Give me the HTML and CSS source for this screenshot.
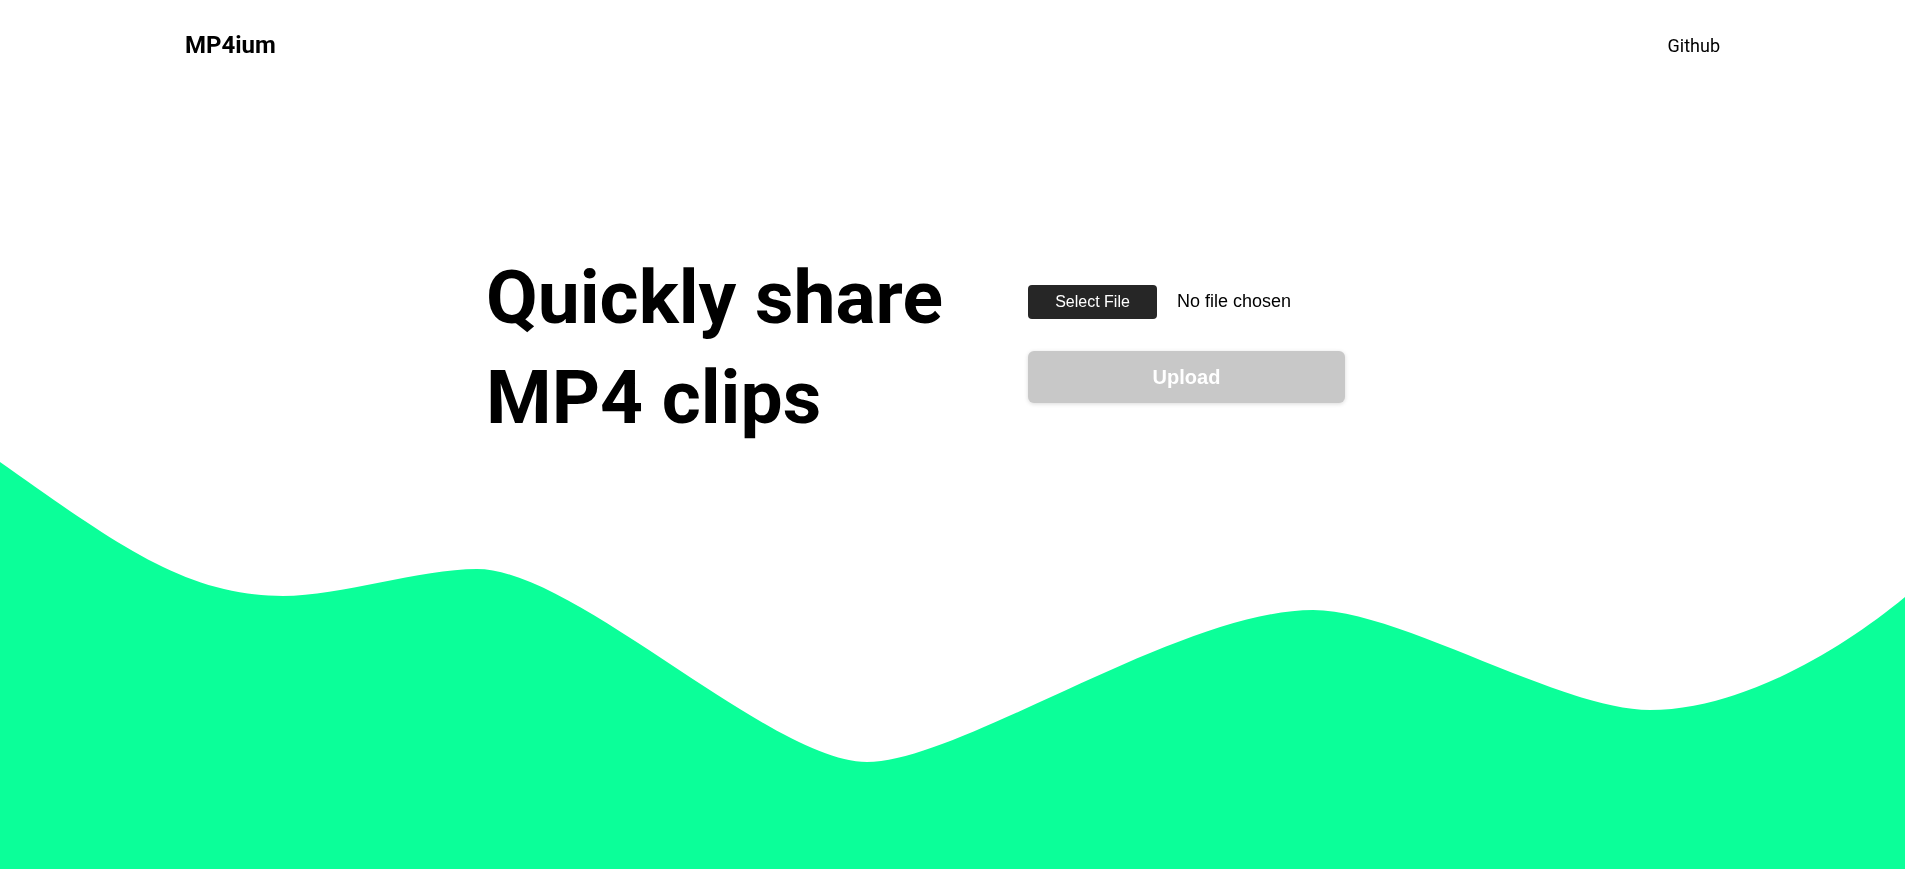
FILE: index.html
```html
<!DOCTYPE html>
<html lang="en">
<head>
<meta charset="utf-8">
<title>MP4ium</title>
<link rel="stylesheet" href="styles.css">
</head>
<body>
<header class="nav">
  <a class="logo" href="#">MP4ium</a>
  <a class="nav-link" href="#">Github</a>
</header>
<main class="hero">
  <h1 class="title">Quickly share<br>MP4 clips</h1>
  <form class="uploader">
    <div class="file-row">
      <label class="file-btn">Select File</label>
      <span class="file-name">No file chosen</span>
    </div>
    <button class="upload-btn" type="button" disabled>Upload</button>
  </form>
</main>
<svg class="wave" viewBox="0 440 1905 429" preserveAspectRatio="none" aria-hidden="true">
  <path fill="#0bff99" d="M0,462 C110,539 183,596 283,596 C340,596 420,569 477,569 C575,569 770,762 867,762 C960,762 1180,610 1313,610 C1400,610 1560,710 1650,710 C1740,710 1840,651 1905,597 L1905,869 L0,869 Z"/>
</svg>
</body>
</html>
```
FILE: styles.css
```css
* { box-sizing: border-box; }
html, body { margin: 0; padding: 0; }
body {
  font-family: Roboto, "Liberation Sans", Arial, sans-serif;
  color: #000;
  background: #fff;
  min-height: 100vh;
  overflow: hidden;
}
.nav {
  display: flex;
  justify-content: space-between;
  align-items: center;
  height: 90px;
  padding: 0 185px;
}
.logo {
  font-weight: 700;
  font-size: 24px;
  color: #000;
  text-decoration: none;
}
.nav-link {
  font-size: 18px;
  color: #000;
  text-decoration: none;
}
.hero {
  display: grid;
  grid-template-columns: 545px 1fr;
  align-items: center;
  width: 939px;
  margin: 157px auto 0;
}
.title {
  margin: 0;
  font-size: 75px;
  line-height: 100px;
  font-weight: 700;
  padding-left: 3px;
}
.uploader {
  display: flex;
  flex-direction: column;
  gap: 32px;
  align-items: flex-start;
  margin-bottom: 6px;
}
.file-row {
  display: flex;
  align-items: center;
  gap: 20px;
}
.file-btn {
  display: flex;
  align-items: center;
  justify-content: center;
  width: 129px;
  height: 34px;
  background: #262626;
  color: #fff;
  border-radius: 4px;
  font-family: "Liberation Sans", Arial, sans-serif;
  font-size: 16px;
}
.file-name {
  font-family: "Liberation Sans", Arial, sans-serif;
  font-size: 18px;
  margin-top: -2px;
}
.upload-btn {
  width: 317px;
  height: 52px;
  border: none;
  border-radius: 6px;
  background: #c8c8c8;
  color: #fff;
  font-family: "Liberation Sans", Arial, sans-serif;
  font-weight: 700;
  font-size: 20px;
  box-shadow: 0 1px 4px rgba(0, 0, 0, 0.15);
}
.wave {
  position: fixed;
  left: 0;
  bottom: 0;
  width: 100%;
  height: 429px;
  z-index: -1;
  display: block;
}
```
